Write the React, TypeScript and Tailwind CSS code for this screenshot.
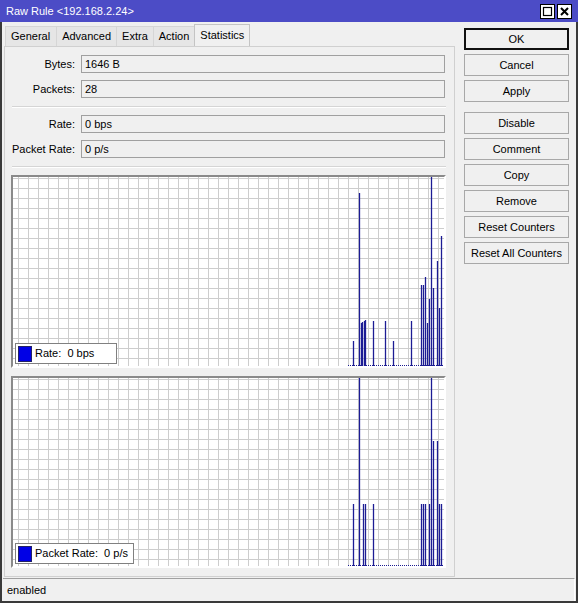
import React from "react";

type Bar = [number, number];

// bar positions: [x, top] measured relative to the plot area
const rateBars: Bar[] = [
  [340, 164], [346, 16], [348, 146], [349, 145], [351, 144], [352, 143],
  [360, 144], [372, 144], [380, 164], [398, 144], [408, 108], [410, 108],
  [412, 100], [414, 146], [416, 122], [418, 0], [420, 111], [424, 84],
  [426, 131], [428, 59],
];

const packetBars: Bar[] = [
  [340, 126], [346, 0], [350, 126], [352, 126], [360, 126], [408, 126],
  [410, 126], [412, 126], [416, 126], [418, 0], [420, 63], [424, 63],
  [426, 126], [428, 126],
];

function Field({ label, value }: { label: string; value: string }) {
  return (
    <div className="flex items-center h-[18px]">
      <div className="w-[70px] text-right whitespace-nowrap">{label}</div>
      <div className="ml-[6px] w-[364px] h-[18px] border border-[#a0a0a0] bg-[#f0f0f0] pl-[3px] leading-[16px]">
        {value}
      </div>
    </div>
  );
}

function Separator() {
  return <div className="ml-[7px] w-[434px] border-t border-[#d5d5d5] border-b border-b-white" />;
}

function Chart({ id, height, bars, legend, legendW }: { id: string; height: number; bars: Bar[]; legend: string; legendW: string }) {
  const base = height - 1;
  return (
    <div className="relative ml-[6px] w-[435px] border-2 border-t-[#8a8a8a] border-l-[#8a8a8a] border-r-white border-b-white bg-white">
      <svg width={431} height={height} className="block">
        <defs>
          <pattern id={id} x={5} y={1} width={10} height={10} patternUnits="userSpaceOnUse">
            <rect width={10} height={10} fill="#ffffff" />
            <path d="M0.5 0 V10 M0 0.5 H10" stroke="#cdcdcd" strokeWidth={1} fill="none" />
          </pattern>
        </defs>
        <rect width={431} height={height} fill={`url(#${id})`} />
        <line x1={335} y1={base + 0.5} x2={431} y2={base + 0.5} stroke="#1c1c90" strokeWidth={1} strokeDasharray="1 1" />
        {bars.map(([x, top], i) => (
          <line key={i} x1={x + 0.5} y1={top} x2={x + 0.5} y2={base + 1} stroke="#1c1c94" strokeWidth={1.3} />
        ))}
      </svg>
      <div className={`absolute left-[2px] bottom-[2px] h-[21px] ${legendW} border border-[#808080] bg-white flex items-center pl-[2px]`}>
        <div className="w-[14px] h-[16px] bg-[#0000e6] border border-[#222266]" />
        <span className="ml-[3px] whitespace-pre">{legend}</span>
      </div>
    </div>
  );
}

function Btn({ children, primary }: { children: React.ReactNode; primary?: boolean }) {
  return (
    <div
      className={`h-[22px] w-[105px] flex items-center justify-center bg-[#f0f0f0] ${
        primary ? "border-2 border-[#111]" : "border border-[#a8a8a8]"
      }`}
    >
      {children}
    </div>
  );
}

export default function App() {
  const tabs = ["General", "Advanced", "Extra", "Action"];
  return (
    <div
      className="w-[578px] h-[603px] bg-[#f0f0f0] text-[11px] text-black flex flex-col overflow-hidden"
      style={{ fontFamily: '"Liberation Sans", Arial, sans-serif' }}
    >
      {/* title bar */}
      <div className="h-[22px] bg-[#4c4cc6] flex items-center justify-between pl-[6px] pr-[6px]">
        <span className="text-white text-[11px]">Raw Rule &lt;192.168.2.24&gt;</span>
        <div className="flex gap-[2px]">
          <svg width={15} height={15} viewBox="0 0 15 15">
            <rect x={0.5} y={0.5} width={14} height={14} fill="#fff" stroke="#000" />
            <rect x={3.5} y={3.5} width={8} height={8} fill="none" stroke="#000" strokeWidth={1.2} />
          </svg>
          <svg width={15} height={15} viewBox="0 0 15 15">
            <rect x={0.5} y={0.5} width={14} height={14} fill="#fff" stroke="#000" />
            <path d="M4 4 L11 11 M11 4 L4 11" stroke="#000" strokeWidth={2} />
          </svg>
        </div>
      </div>

      <div className="flex-1 flex flex-col border-l-2 border-r-2 border-b-2 border-[#3a3a3a]">
        <div className="flex">
          {/* left column */}
          <div className="ml-[2px] w-[451px]">
            <div className="h-[24px] flex items-end pl-[1px]">
              {tabs.map((t) => (
                <div key={t} className="h-[20px] px-[5px] flex items-center bg-[#e6e6e6] border border-[#d6d6d6] border-b-0 -ml-px first:ml-0 first:pr-[6px]">
                  {t}
                </div>
              ))}
              <div className="h-[22px] w-[56px] -ml-px flex items-center justify-center bg-[#f0f0f0] border border-[#c4c4c4] border-b-0">
                Statistics
              </div>
            </div>
            <div className="h-[531px] border border-[#d0d0d0] pt-[8px] flex flex-col">
              <div className="flex flex-col gap-[7px]">
                <Field label="Bytes:" value="1646 B" />
                <Field label="Packets:" value="28" />
              </div>
              <div className="mt-[8px]">
                <Separator />
              </div>
              <div className="mt-[7px] flex flex-col gap-[7px]">
                <Field label="Rate:" value="0 bps" />
                <Field label="Packet Rate:" value="0 p/s" />
              </div>
              <div className="mt-[8px]">
                <Separator />
              </div>
              <div className="mt-[7px]">
                <Chart id="grid-rate" height={189} bars={rateBars} legend="Rate:  0 bps" legendW="w-[102px]" />
              </div>
              <div className="mt-[8px]">
                <Chart id="grid-packet" height={188} bars={packetBars} legend="Packet Rate:  0 p/s" legendW="w-[119px]" />
              </div>
            </div>
          </div>

          {/* right column */}
          <div className="ml-[9px] pt-[6px] flex flex-col gap-[4px]">
            <Btn primary>OK</Btn>
            <Btn>Cancel</Btn>
            <Btn>Apply</Btn>
            <div className="mt-[6px]">
              <Btn>Disable</Btn>
            </div>
            <Btn>Comment</Btn>
            <Btn>Copy</Btn>
            <Btn>Remove</Btn>
            <Btn>Reset Counters</Btn>
            <Btn>Reset All Counters</Btn>
          </div>
        </div>

        {/* status bar */}
        <div className="flex-1 mt-[1px] mx-[1px] border-t border-[#a0a0a0] border-r border-r-white flex items-center pl-[4px]">
          enabled
        </div>
      </div>
    </div>
  );
}
